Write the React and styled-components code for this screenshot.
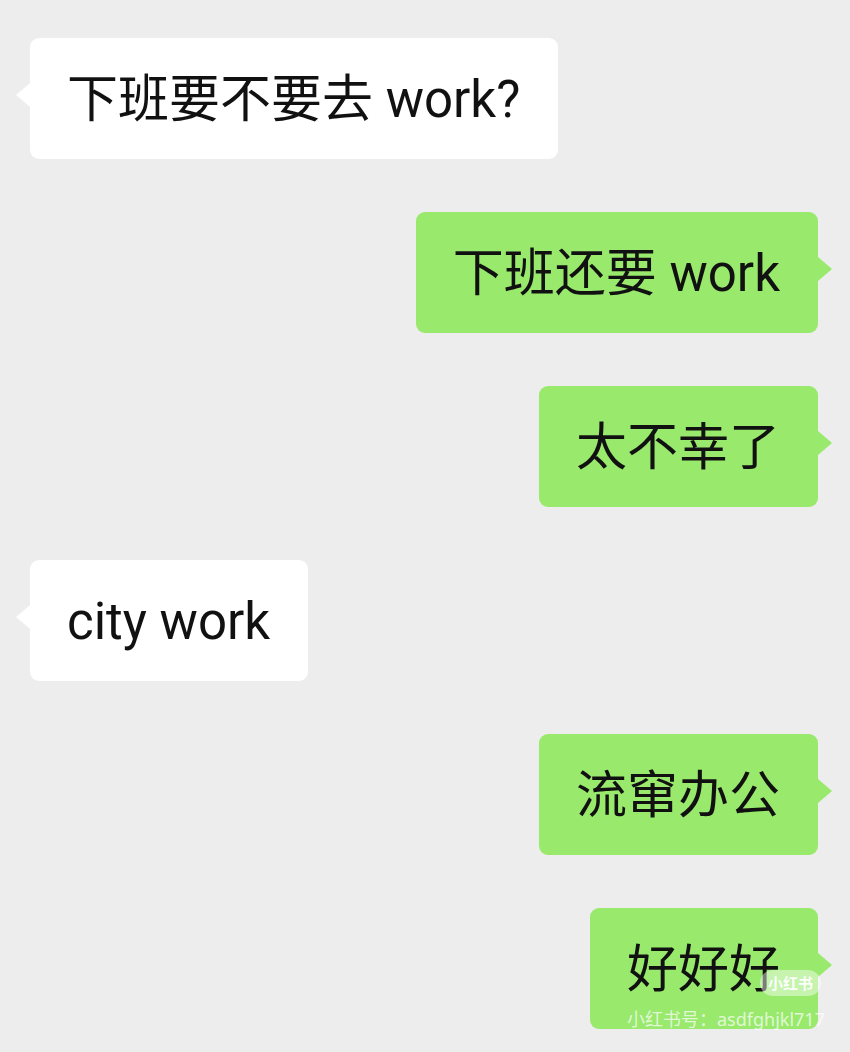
import React from "react"
import styled, { createGlobalStyle } from "styled-components"

const bg = "#ededed"
const green = "#98e96c"

const Global = createGlobalStyle`
  html, body {
    margin: 0;
    padding: 0;
    background: ${bg};
  }
`

const Screen = styled.div`
  width: 850px;
  height: 1052px;
  overflow: hidden;
  background: ${bg};
  box-sizing: border-box;
  padding: 38px 32px 0 30px;
  display: flex;
  flex-direction: column;
  gap: 53px;
  font-family: Roboto, "Noto Sans CJK SC", sans-serif;
`

const Row = styled.div`
  display: flex;
  justify-content: ${props => (props.mine ? "flex-end" : "flex-start")};
`

const Bubble = styled.div`
  position: relative;
  background: ${props => (props.mine ? green : "#ffffff")};
  color: #111;
  border-radius: 9px;
  height: 121px;
  box-sizing: border-box;
  padding: 2px 38px 0 37px;
  display: flex;
  align-items: center;
  font-size: 51px;
  line-height: 1;
  white-space: nowrap;

  &::before {
    content: "";
    position: absolute;
    top: 45px;
    ${props => (props.mine ? "right: -14px;" : "left: -14px;")}
    border-top: 12px solid transparent;
    border-bottom: 12px solid transparent;
    ${props =>
      props.mine
        ? `border-left: 14px solid ${green};`
        : "border-right: 14px solid #ffffff;"}
  }
`

const Badge = styled.div`
  position: absolute;
  right: -3px;
  top: 62px;
  padding: 3px 8px;
  border-radius: 13px;
  background: rgba(255, 255, 255, 0.45);
  color: rgba(255, 255, 255, 0.95);
  font-size: 15px;
  font-weight: 700;
  line-height: 20px;
  font-family: "Noto Sans CJK SC", sans-serif;
`

const Mark = styled.div`
  position: absolute;
  left: 37px;
  bottom: -1px;
  color: rgba(255, 255, 255, 0.72);
  font-size: 18px;
  line-height: 22px;
  font-family: "Noto Sans", "Noto Sans CJK SC", sans-serif;
`

const messages = [
  { text: "下班要不要去 work?" },
  { text: "下班还要 work", mine: true },
  { text: "太不幸了", mine: true },
  { text: "city work" },
  { text: "流窜办公", mine: true },
]

const App = () => {
  return (
    <>
      <Global />
      <Screen>
        {messages.map((m, i) => (
          <Row key={i} mine={m.mine}>
            <Bubble mine={m.mine}>{m.text}</Bubble>
          </Row>
        ))}
        <Row mine>
          <Bubble mine>
            好好好
            <Badge>小红书</Badge>
            <Mark>小红书号：asdfghjkl717</Mark>
          </Bubble>
        </Row>
      </Screen>
    </>
  )
}

export default App
